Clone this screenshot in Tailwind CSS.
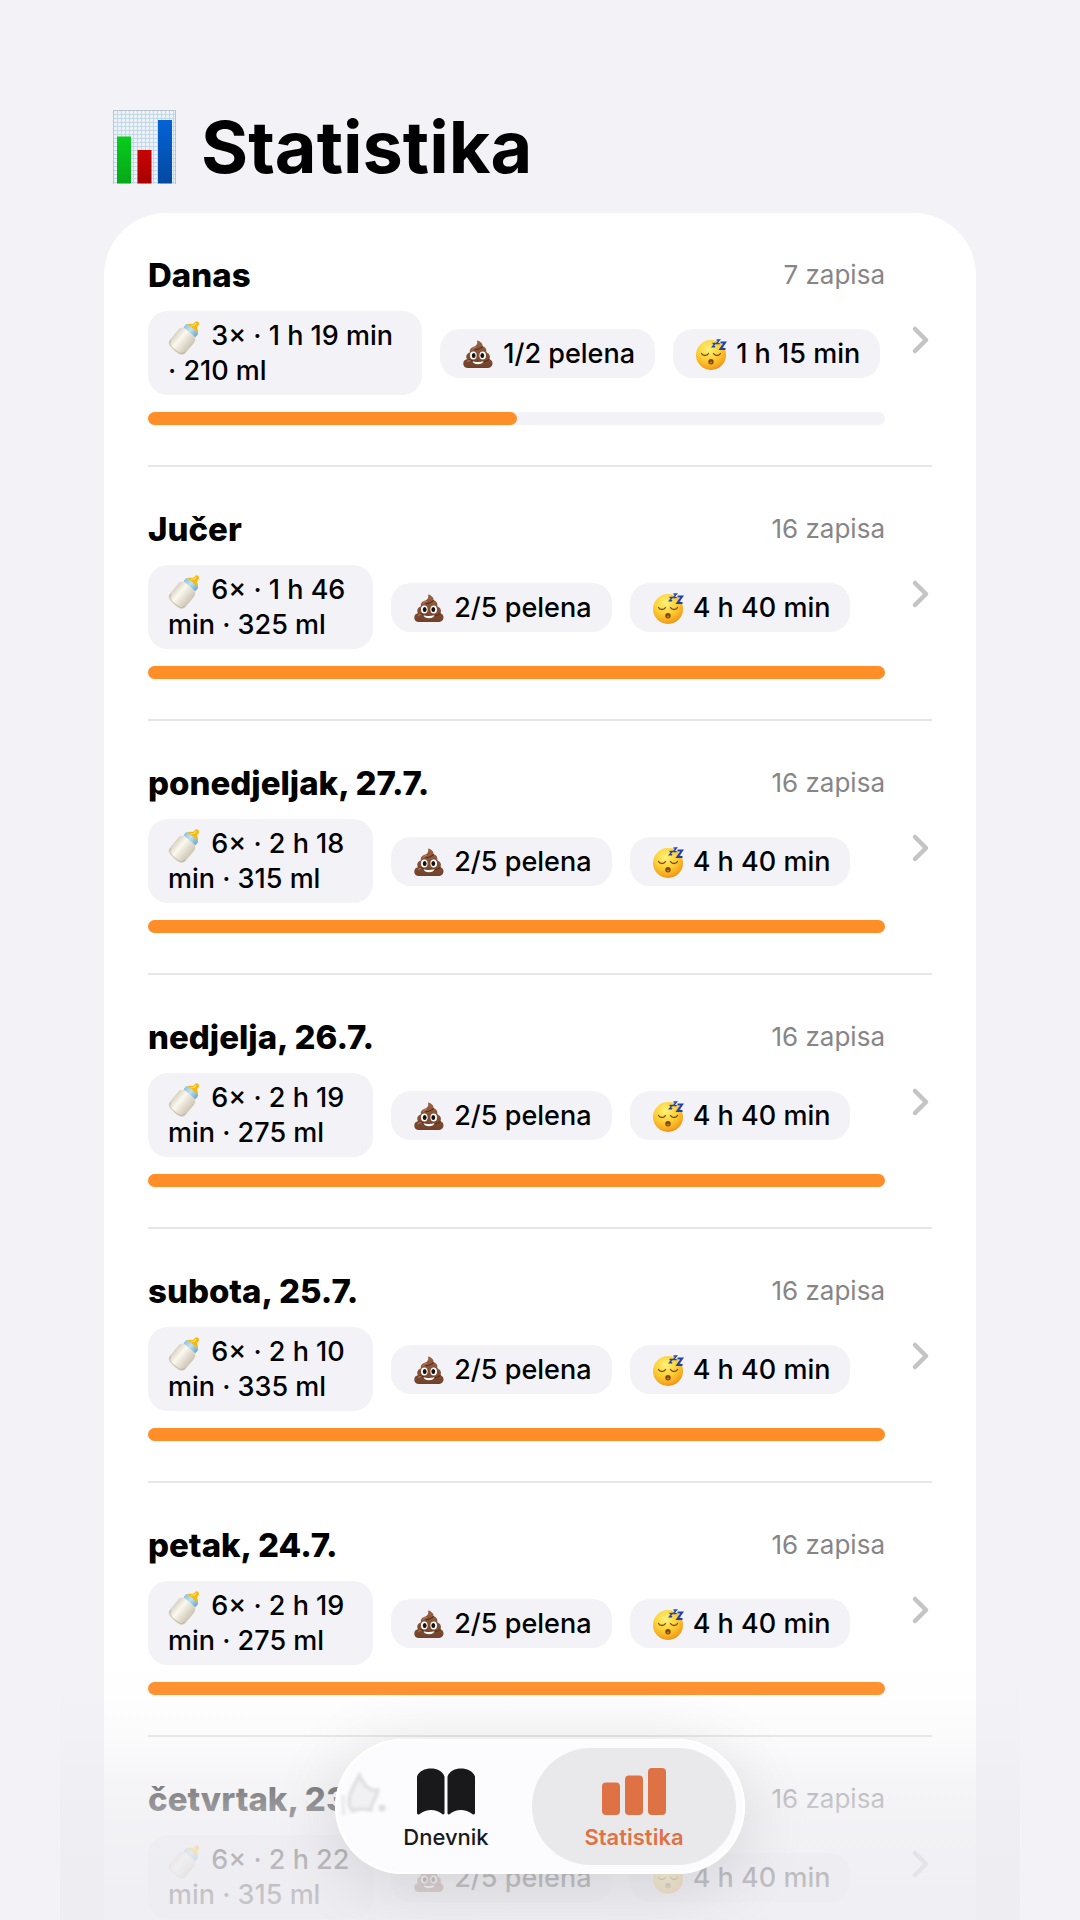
<!DOCTYPE html>
<html lang="hr">
<head>
    <meta charset="UTF-8" />
    <meta name="viewport" content="width=device-width, initial-scale=1.0"/>
    <title>Statistika</title>
    <script src="https://cdn.jsdelivr.net/npm/@tailwindcss/browser@4"></script>
</head>
<body class="bg-[#f2f2f7] h-screen overflow-hidden relative font-['Inter',sans-serif] text-black">

<!-- Shared icons -->
<svg class="absolute w-0 h-0" aria-hidden="true">
    <defs>
        <linearGradient id="g-milk" x1="0" y1="0" x2="1" y2="0">
            <stop offset="0" stop-color="#d8d2c4"/><stop offset=".35" stop-color="#fbf8ee"/><stop offset="1" stop-color="#cdc5b4"/>
        </linearGradient>
        <linearGradient id="g-ring" x1="0" y1="0" x2="1" y2="0">
            <stop offset="0" stop-color="#8fc3dc"/><stop offset=".45" stop-color="#bfe2f0"/><stop offset="1" stop-color="#6ea9c8"/>
        </linearGradient>
        <linearGradient id="g-poo" x1="0" y1="0" x2="0" y2="1">
            <stop offset="0" stop-color="#9a6244"/><stop offset="1" stop-color="#70412a"/>
        </linearGradient>
        <radialGradient id="g-face" cx=".42" cy=".3" r=".75">
            <stop offset="0" stop-color="#fff27a"/><stop offset=".5" stop-color="#fdcf35"/><stop offset=".85" stop-color="#f5a31c"/><stop offset="1" stop-color="#e3850f"/>
        </radialGradient>
        <pattern id="p-grid" width="4" height="4" patternUnits="userSpaceOnUse">
            <rect width="4" height="4" fill="#f0f1f2"/>
            <path d="M0 .5H4M.5 0V4" stroke="#bfd9ea" stroke-width="1"/>
        </pattern>
        <linearGradient id="g-green" x1="0" y1="0" x2="0" y2="1"><stop offset="0" stop-color="#08cc1c"/><stop offset="1" stop-color="#05a818"/></linearGradient>
        <linearGradient id="g-red" x1="0" y1="0" x2="0" y2="1"><stop offset="0" stop-color="#c80404"/><stop offset="1" stop-color="#a80000"/></linearGradient>
        <linearGradient id="g-blue" x1="0" y1="0" x2="0" y2="1"><stop offset="0" stop-color="#0563d6"/><stop offset="1" stop-color="#0349a0"/></linearGradient>
        <filter id="f-soft" x="-30%" y="-30%" width="160%" height="160%"><feGaussianBlur stdDeviation="1.8"/></filter>
    </defs>

    <symbol id="icon-bottle" viewBox="0 0 36 34">
        <g transform="translate(17.500 16) rotate(40) scale(1.2 1.02) translate(-18 -16.500)">
            <path d="M16 -.5c0-3 4-3 4 0 0 2 .2 2.700 1.600 3.700 1.200.8 1.900 1.400 1.900 2.600h-11c0-1.200.7-1.800 1.900-2.600C15.800 2.200 16 1.500 16 -.5z" fill="#f7b90b"/>
            <path d="M17.300-.5v3l-2 2.300" fill="none" stroke="#ffe477" stroke-width="1"/>
            <rect x="11.500" y="5.500" width="13" height="5.500" rx="1.500" fill="url(#g-ring)"/>
            <path d="M12.500 10.500h11c2.500 1.500 3 3 3 5.500v12c0 4.500-2.500 6-8.500 6s-8.500-1.500-8.500-6V16c0-2.500.5-4 3-5.500z" fill="url(#g-milk)"/>
            <path d="M10.500 28c0 4 2.500 5 7.500 5s7.500-1 7.500-5" fill="none" stroke="#b9ae98" stroke-width="1" opacity=".7"/>
        </g>
    </symbol>

    <symbol id="icon-poo" viewBox="0 0 36 34">
        <path d="M17 2.500c3.500.8 6 3 5.500 5.800 3 .7 4.500 3.200 3.700 6.200 3.300.8 4.600 4 3.100 6.700 3.200 1 3.900 4 2.700 6.300-1 2-2.800 2.500-5.500 2.500h-18c-3 0-5.200-1.200-5.200-4.500 0-2.500 1.600-4 3.600-4.300-1.400-2.900-.3-6 3-6.700-.6-2.700.6-4.700 3.600-5.700C16 7.800 18 6.500 17 2.500z" fill="url(#g-poo)"/>
        <path d="M22.300 8.500c-1.300 2-4 2.700-7.300 3.300M26 14.700c-1 1.200-2.500 1.800-4 2M9.500 21.800c3 1.700 5 2 8 2M29.300 21.300c-1.500 1.500-3 2-5 2.300" fill="none" stroke="#552d1a" stroke-width="1.100" stroke-linecap="round"/>
        <path d="M12 11.500c.8-1.200 2-1.700 3.500-2.200M7.500 23.500c.8-.8 1.500-1 2.500-1" fill="none" stroke="#c08a68" stroke-width="1" stroke-linecap="round"/>
        <ellipse cx="13.300" cy="17.500" rx="3.300" ry="4" fill="#fff"/>
        <ellipse cx="22.700" cy="17.500" rx="3.300" ry="4" fill="#fff"/>
        <ellipse cx="13.700" cy="17.500" rx="1.900" ry="2.500" fill="#17100c"/>
        <ellipse cx="22.300" cy="17.500" rx="1.900" ry="2.500" fill="#17100c"/>
        <path d="M12.500 23.200c3.500 1 7.500 1 11 0-.8 4-10.200 4-11 0z" fill="#fff"/>
    </symbol>

    <symbol id="icon-sleep" viewBox="0 0 36 34">
        <circle cx="18" cy="17" r="15" fill="url(#g-face)"/>
        <path d="M8.500 15.500c1.500 2.600 5.500 2.600 7 0M20.500 15.500c1.500 2.600 5.500 2.600 7 0" fill="none" stroke="#7a4a10" stroke-width="1.400" stroke-linecap="round"/>
        <circle cx="18" cy="23.800" r="2.700" fill="#7a4608"/>
        <ellipse cx="18" cy="24.600" rx="1.400" ry="1" fill="#c17a1a"/>
        <path d="M19.500 5.500h2.700l-2.700 3.300h2.700M23.500 2h3l-3 3.600h3.200" fill="none" stroke="#2347b5" stroke-width="1.400"/>
        <path d="M27.500 4.500h4.500L27.500 11h5" fill="none" stroke="#1f41b0" stroke-width="2.100"/>
    </symbol>
</svg>

<header class="pt-[101px] pl-[113px] pr-26">
    <h1 class="flex items-center gap-[25px] h-[92px] text-[72px] leading-[92px] font-bold">
        <svg class="w-[63px] h-[74px] shrink-0" viewBox="0 0 63 74" role="img" aria-label="Grafikon">
            <rect width="63" height="74" fill="url(#p-grid)"/>
            <path d="M.5 0V74M62.500 0V74M0 .5H63" stroke="#b9c6cf" stroke-width="1" fill="none"/>
            <rect x="4" y="26.500" width="14" height="47" fill="url(#g-green)"/>
            <rect x="24.500" y="40" width="14" height="33.500" fill="url(#g-red)"/>
            <rect x="45" y="10" width="14" height="63.500" fill="url(#g-blue)"/>
        </svg>
        Statistika
    </h1>
</header>

<main class="mt-5 mx-26 bg-white rounded-t-[62px]">
    <ul id="days"></ul>
</main>

<!-- Fade behind the tab bar -->
<div class="absolute bottom-0 inset-x-[60px] h-[290px] pointer-events-none bg-[linear-gradient(to_bottom,#edecf100_0%,#edecf10d_21%,#edecf133_36%,#edecf180_51%,#edecf1b0_65%,#edecf1c6_79%,#edecf1dc_100%)]"></div>

<!-- Tab bar -->
<nav class="absolute bottom-[46px] left-1/2 -translate-x-1/2 flex p-[9px] rounded-full bg-[#fcfcfe] shadow-[0_12px_70px_rgba(0,0,0,0.12),inset_0_0_0_2px_#fff]">
    <svg class="absolute left-[4px] top-[26px] w-[54px] h-[60px]" viewBox="0 0 54 60" fill="none" aria-hidden="true">
        <g filter="url(#f-soft)" stroke="#dcdcdf" stroke-width="3">
            <path d="M21 8C17 20 9 26 10 40l3 6c7-3 14-2 19-1 0-8 6-12 7-20-8 2-14-5-18-13" fill="#f1f1f3"/>
            <path d="M4 30c0 8 0 14 1 20" stroke="#e6e6ea"/>
            <circle cx="43" cy="43" r="2" fill="#d3d3d6"/>
        </g>
    </svg>
    <a href="#dnevnik" class="relative w-[204px] pt-5 pb-[14px] flex flex-col items-center gap-2 rounded-full text-[#19191b]">
        <svg class="h-[47px] w-[58px]" viewBox="0 0 58 47" fill="currentColor" aria-hidden="true">
            <path d="M0 8.500C2 3 8 .5 14 .5S25.500 3 27.500 8.500V45c0 1.500-1.200 1.800-2.300.9-6.500-5.200-15.500-5.200-22.500 0C1.300 46.800 0 46.500 0 45z"/>
            <path d="M30.500 8.500C32.500 3 38 .5 44 .5S56 3 58 8.500V45c0 1.500-1.300 1.800-2.700.9-7-5.200-16-5.200-22.500 0-1.100.9-2.300.6-2.300-.9z"/>
        </svg>
        <span class="text-[22px] leading-7 font-medium">Dnevnik</span>
    </a>
    <a href="#statistika" aria-current="page" class="relative -ml-4 w-[204px] pt-5 pb-[14px] flex flex-col items-center gap-2 rounded-full bg-[#e9e9eb] text-[#df7245]">
        <svg class="h-[47px] w-[64px]" viewBox="0 0 64 47" fill="currentColor" aria-hidden="true">
            <rect x="0" y="14.500" width="18" height="32.500" rx="4"/>
            <rect x="23" y="7.500" width="18" height="39.500" rx="4"/>
            <rect x="46" y="0" width="18" height="47" rx="4"/>
        </svg>
        <span class="text-[22px] leading-7 font-semibold">Statistika</span>
    </a>
</nav>

<script>
    // the amount is kept together with its dot when the text wraps
    const days = [
        { name: 'Danas', count: 7, feed: '3× · 1 h 19 min ·&nbsp;210&nbsp;ml', diapers: '1/2', sleep: '1 h 15 min', progress: 50, wide: true },
        { name: 'Jučer', count: 16, feed: '6× · 1 h 46 min ·&nbsp;325&nbsp;ml', diapers: '2/5', sleep: '4 h 40 min', progress: 100 },
        { name: 'ponedjeljak, 27.7.', count: 16, feed: '6× · 2 h 18 min ·&nbsp;315&nbsp;ml', diapers: '2/5', sleep: '4 h 40 min', progress: 100 },
        { name: 'nedjelja, 26.7.', count: 16, feed: '6× · 2 h 19 min ·&nbsp;275&nbsp;ml', diapers: '2/5', sleep: '4 h 40 min', progress: 100 },
        { name: 'subota, 25.7.', count: 16, feed: '6× · 2 h 10 min ·&nbsp;335&nbsp;ml', diapers: '2/5', sleep: '4 h 40 min', progress: 100 },
        { name: 'petak, 24.7.', count: 16, feed: '6× · 2 h 19 min ·&nbsp;275&nbsp;ml', diapers: '2/5', sleep: '4 h 40 min', progress: 100 },
        { name: 'četvrtak, 23.7.', count: 16, feed: '6× · 2 h 22 min ·&nbsp;315&nbsp;ml', diapers: '2/5', sleep: '4 h 40 min', progress: 100 }
    ];

    const icon = id => `<svg class="inline-block align-middle w-[36px] h-[34px] -mt-1 -mb-1" aria-hidden="true"><use href="#${id}"/></svg>`;

    document.getElementById('days').innerHTML = days.map(day => `
        <li class="mx-11 border-b-2 border-[#e6e6e8]">
            <a href="#" class="flex items-center gap-6 pt-[42px] pb-10">
                <div class="flex-1 min-w-0">
                    <div class="flex justify-between items-center">
                        <h2 class="text-[33px] leading-10 font-extrabold">${day.name}</h2>
                        <span class="text-[26px] leading-10 text-[#868688]">${day.count} zapisa</span>
                    </div>
                    <div class="mt-4 flex items-center gap-[18px] text-[27px] leading-[35px] font-medium">
                        <div class="${day.wide ? 'w-[274px]' : 'w-[225px]'} shrink-0 px-5 py-[7px] rounded-[20px] bg-[#f2f2f7]">${icon('icon-bottle')} ${day.feed}</div>
                        <div class="shrink-0 whitespace-nowrap px-5 py-[7px] rounded-[20px] bg-[#f2f2f7]">${icon('icon-poo')} ${day.diapers} pelena</div>
                        <div class="shrink-0 whitespace-nowrap px-5 py-[7px] rounded-[20px] bg-[#f2f2f7]">${icon('icon-sleep')} ${day.sleep}</div>
                    </div>
                    <div role="progressbar" aria-label="${day.name}" aria-valuenow="${day.progress}" class="mt-[17px] h-[13px] rounded-full bg-[#f2f2f7]">
                        <div class="h-full rounded-full bg-[#ff8d28]" style="width: ${day.progress}%"></div>
                    </div>
                </div>
                <svg class="w-[23px] h-[30px] shrink-0" viewBox="0 0 23 30" fill="none" stroke="#c4c4c6" stroke-width="4.500" stroke-linecap="round" stroke-linejoin="round" aria-hidden="true">
                    <path d="M6 4l11 11L6 26"/>
                </svg>
            </a>
        </li>`).join('');
</script>
</body>
</html>
